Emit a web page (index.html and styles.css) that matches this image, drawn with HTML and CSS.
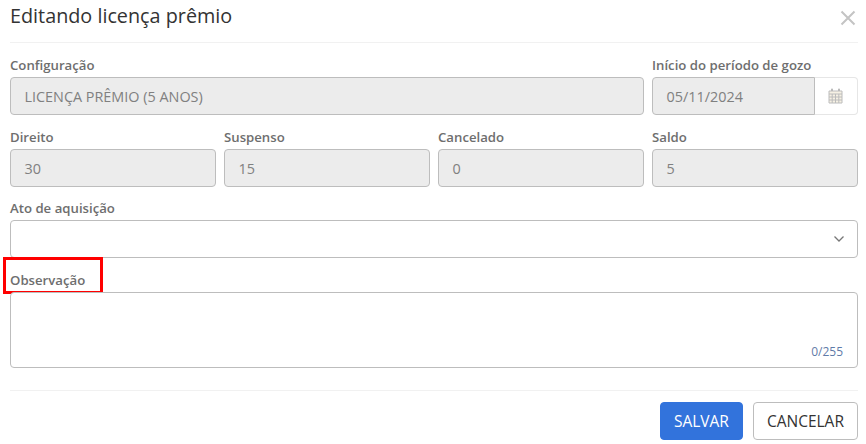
FILE: index.html
```html
<!DOCTYPE html>
<html lang="pt-BR">
<head>
  <meta charset="UTF-8" />
  <title>Editando licença prêmio</title>
  <link rel="stylesheet" href="styles.css">
</head>
<body>
  <div class="modal">
    <header class="modal-header">
      <h1>Editando licença prêmio</h1>
      <svg class="close" width="16" height="16" viewBox="0 0 16 16"><path d="M1.5 1.5l13 13M14.5 1.5l-13 13" /></svg>
    </header>

    <div class="row row-top">
      <div class="field">
        <label>Configuração</label>
        <div class="input disabled">LICENÇA PRÊMIO (5 ANOS)</div>
      </div>
      <div class="field">
        <label>Início do período de gozo</label>
        <div class="date-group">
          <div class="input disabled">05/11/2024</div>
          <span class="addon">
            <svg width="15" height="16" viewBox="0 0 15 16">
              <rect x="3" y="0.5" width="2" height="4" rx="1" class="cal-fill" />
              <rect x="10" y="0.5" width="2" height="4" rx="1" class="cal-fill" />
              <path class="cal-line" d="M1 3h13v12H1zM1 6h13M1 9h13M1 12h13M4.2 6v9M7.5 6v9M10.8 6v9" />
            </svg>
          </span>
        </div>
      </div>
    </div>

    <div class="row row-four">
      <div class="field"><label>Direito</label><div class="input disabled">30</div></div>
      <div class="field"><label>Suspenso</label><div class="input disabled">15</div></div>
      <div class="field"><label>Cancelado</label><div class="input disabled">0</div></div>
      <div class="field"><label>Saldo</label><div class="input disabled">5</div></div>
    </div>

    <div class="field">
      <label>Ato de aquisição</label>
      <div class="input select">
        <svg width="12" height="8" viewBox="0 0 12 8"><path d="M1.5 1.5L6 6l4.5-4.5" /></svg>
      </div>
    </div>

    <div class="field field-obs">
      <label class="highlighted">Observação</label>
      <div class="input textarea"><span class="counter">0/255</span></div>
    </div>

    <footer class="modal-footer">
      <button class="btn btn-primary">SALVAR</button>
      <button class="btn">CANCELAR</button>
    </footer>
  </div>
</body>
</html>
```

FILE: styles.css
```css
body {
  margin: 0;
  background-color: #fff;
  font-family: "Open Sans", Arial, sans-serif;
  color: #666;
}

.modal {
  padding: 0 8px 0 10px;
}

.modal-header {
  display: flex;
  justify-content: space-between;
  align-items: center;
  height: 43px;
  padding-bottom: 12px;
  box-sizing: border-box;
  border-bottom: 1px solid #f1f1f1;
  margin-bottom: 14px;
}

.modal-header h1 {
  margin: 0;
  font-size: 19.8px;
  font-weight: 400;
  color: #333;
}

.close {
  fill: none;
  stroke: #c4c4c4;
  stroke-width: 2;
  margin-right: 2px;
  margin-top: 5px;
}

.row {
  display: grid;
  column-gap: 8px;
  margin-bottom: 13.5px;
}

.row-top {
  grid-template-columns: 634px 206px;
}

.row-four {
  grid-template-columns: repeat(4, 206px);
}

.field label {
  display: block;
  height: 20px;
  line-height: 16px;
  font-size: 13.2px;
  font-weight: 600;
  color: #6e6e6e;
}

.input {
  height: 38px;
  box-sizing: border-box;
  border: 1px solid #bdbdbd;
  border-radius: 4px;
  padding: 0 13px 0 13.5px;
  font-size: 14.4px;
  line-height: 37px;
  background-color: #fff;
}

.disabled {
  background-color: #ececec;
  color: #808080;
}

.date-group {
  display: flex;
}

.date-group .input {
  flex: 1;
  border-radius: 4px 0 0 4px;
}

.addon {
  display: flex;
  width: 43px;
  height: 38px;
  box-sizing: border-box;
  align-items: center;
  justify-content: center;
  border: 1px solid #e6e6e6;
  border-left: 0;
  border-radius: 0 4px 4px 0;
  padding-right: 2px;
}

.cal-fill {
  fill: #b5b5b5;
}

.cal-line {
  fill: #f6f1e4;
  stroke: #bcbcbc;
  stroke-width: 1;
}

.select {
  display: flex;
  align-items: center;
  justify-content: flex-end;
  padding-right: 12px;
}

.select svg {
  fill: none;
  stroke: #777;
  stroke-width: 1.3;
}

.field-obs {
  margin-top: 14px;
}

.highlighted {
  position: relative;
}

/* caixa vermelha em volta do label */
.highlighted::after {
  content: "";
  position: absolute;
  left: -7px;
  top: -15px;
  width: 100px;
  height: 37px;
  box-sizing: border-box;
  border: 3px solid #f00;
}

.textarea {
  position: relative;
  height: 76px;
}

.counter {
  position: absolute;
  right: 14px;
  bottom: 1px;
  line-height: 28px;
  font-size: 12px;
  color: #5f7ba8;
}

.modal-footer {
  display: flex;
  justify-content: flex-end;
  gap: 10px;
  border-top: 1px solid #f1f1f1;
  margin-top: 22px;
  padding-top: 11px;
}

.btn {
  height: 38px;
  padding: 0 13px;
  border: 1px solid #bdbdbd;
  border-radius: 4px;
  background-color: #fff;
  font-family: "Open Sans", Arial, sans-serif;
  font-size: 15.5px;
  color: #333;
}

.btn-primary {
  border-color: #3273dc;
  background-color: #3273dc;
  color: #fff;
}
```
